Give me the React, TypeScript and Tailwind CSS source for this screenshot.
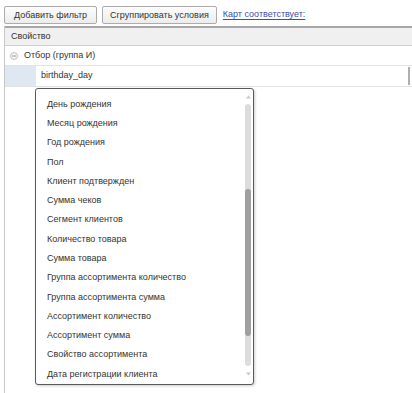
const items = [
  "День рождения",
  "Месяц рождения",
  "Год рождения",
  "Пол",
  "Клиент подтвержден",
  "Сумма чеков",
  "Сегмент клиентов",
  "Количество товара",
  "Сумма товара",
  "Группа ассортимента количество",
  "Группа ассортимента сумма",
  "Ассортимент количество",
  "Ассортимент сумма",
  "Свойство ассортимента",
  "Дата регистрации клиента",
];

function ToolButton({ label, pad }: { label: string; pad: string }) {
  return (
    <button className={`h-[18px] ${pad} border border-[#acacac] rounded-[2px] bg-gradient-to-b from-[#fdfdfd] to-[#ececec] text-[9px] leading-none text-[#333]`}>
      {label}
    </button>
  );
}

export default function App() {
  return (
    <div className="w-[412px] h-[393px] bg-white overflow-hidden font-['Liberation_Sans',Arial,sans-serif] text-[9px] text-[#333]">
      <div className="flex items-center gap-[5px] pl-[4px] pt-[6px] h-[26px] pb-[2px]">
        <ToolButton label="Добавить фильтр" pad="px-[9px]" />
        <ToolButton label="Сгруппировать условия" pad="px-[7px]" />
        <a className="ml-[1px] text-[#3a4fa8] underline underline-offset-2 cursor-pointer">Карт соответствует:</a>
      </div>

      <div className="ml-[4px] border-l border-[#c8c8c8] h-[367px] relative">
        <div className="h-[20px] border-t-2 border-[#a8a8a8] border-b border-b-[#d0d0d0] bg-[#f0f0f0] flex items-center pl-[6px]">
          Свойство
        </div>
        <div className="h-[20px] border-b border-[#e2e2e2] flex items-center pl-[5px] gap-[6px]">
          <svg width="8" height="8" viewBox="0 0 8 8">
            <circle cx="4" cy="4" r="3.5" fill="#f4f4f4" stroke="#c4c4c4" />
            <line x1="2" y1="4" x2="6" y2="4" stroke="#9a9a9a" />
          </svg>
          <span>Отбор (группа И)</span>
        </div>
        <div className="h-[21px] border-b border-[#e2e2e2] flex items-stretch">
          <div className="w-[31px] bg-[#dfe7f2]" />
          <div className="flex-1 flex items-center pl-[5px]">birthday_day</div>
          <div className="w-[2px] my-[1px] bg-[#b0b0b0] mr-[2px]" />
        </div>

        <div className="absolute left-[30px] top-[62px] w-[219px] h-[297px] border border-[#5a5a5a] rounded-[3px] bg-white shadow-[1px_1px_3px_rgba(0,0,0,0.2)] flex">
          <div className="flex-1 flex flex-col pt-[6px] pl-[11px]">
            {items.map((t) => (
              <div key={t} className="h-[19.4px] flex items-center whitespace-nowrap">
                {t}
              </div>
            ))}
          </div>
          <div className="w-[8px] mr-[1px] flex flex-col items-center pt-[6px]">
            <svg width="5" height="4" viewBox="0 0 5 4">
              <path d="M0 3.5 L2.5 0.5 L5 3.5 Z" fill="#c8c8c8" />
            </svg>
            <div className="h-[262px] w-[6px] mt-[5px] rounded-[3px] bg-[#dcdcdc] flex flex-col">
              <div className="h-[85px]" />
              <div className="h-[147px] rounded-[3px] bg-[#a0a0a0]" />
            </div>
            <svg className="mt-[6px]" width="5" height="4" viewBox="0 0 5 4">
              <path d="M0 0.5 L5 0.5 L2.5 3.5 Z" fill="#c8c8c8" />
            </svg>
          </div>
        </div>
      </div>
    </div>
  );
}
